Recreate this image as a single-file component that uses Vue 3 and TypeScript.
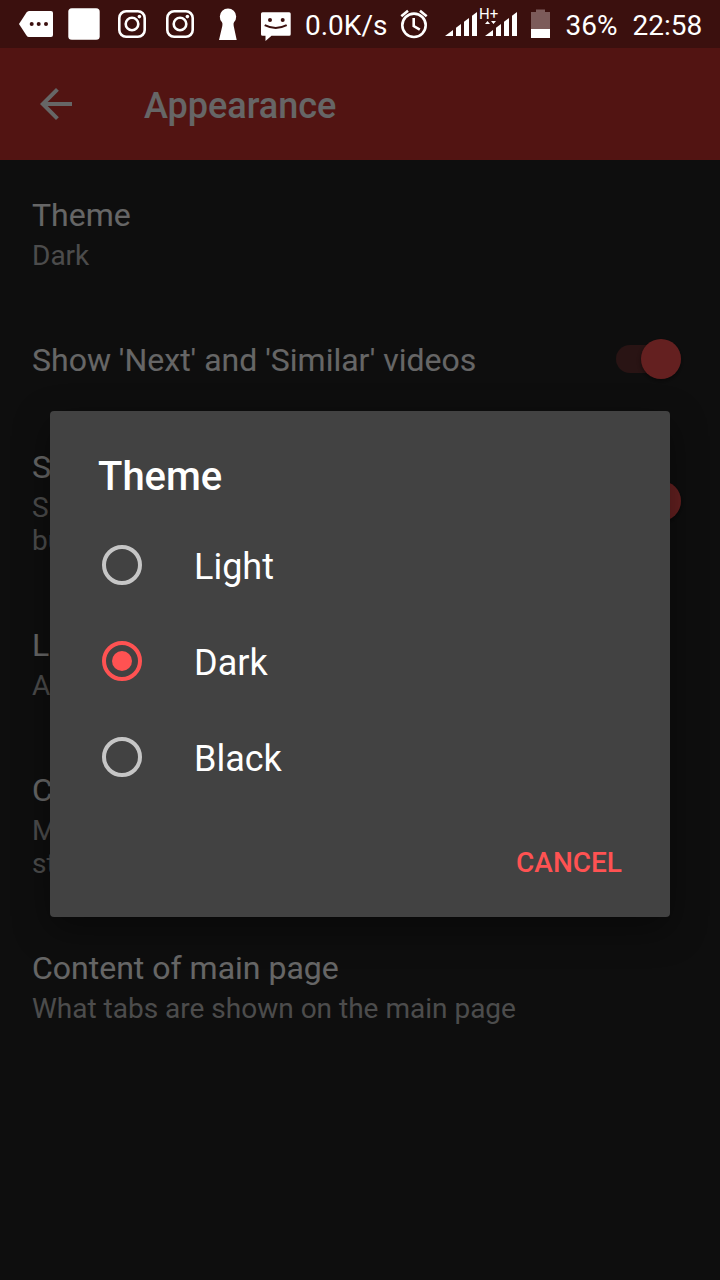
<script setup lang="ts">
import { reactive, ref } from 'vue'

interface Preference {
  id: string
  title: string
  summary?: string
  toggle?: boolean
}

const preferences: Preference[] = [
  { id: 'theme', title: 'Theme', summary: 'Dark' },
  { id: 'similar', title: "Show 'Next' and 'Similar' videos", toggle: true },
  {
    id: 'tip',
    title: 'Show "Hold to append" tip',
    summary: 'Show tip when background or popup\nbutton is pressed on video page',
    toggle: true,
  },
  { id: 'list', title: 'List view mode', summary: 'Auto' },
  {
    id: 'captions',
    title: 'Captions',
    summary: 'Modify player caption text scale and\nstyles. Requires app restart',
  },
  { id: 'tabs', title: 'Content of main page', summary: 'What tabs are shown on the main page' },
]

const enabled = reactive<Record<string, boolean>>({ similar: true, tip: true })
const themes = ['Light', 'Dark', 'Black']
const selected = ref('Dark')
const dialogOpen = ref(true)

function openPreference(id: string) {
  if (id === 'theme') dialogOpen.value = true
}
</script>

<template>
  <div class="screen">
    <header class="status">
      <svg class="icon" viewBox="0 0 48 48" aria-hidden="true">
        <path d="M7 24 14.500 12.500Q15.500 11 17 11H39Q41 11 41 13V35Q41 37 39 37H17Q15.500 37 14.500 35.500Z" fill="#fff" />
        <g class="cut"><circle cx="19.700" cy="24" r="2" /><circle cx="26.700" cy="24" r="2" /><circle cx="34" cy="24" r="2" /></g>
      </svg>
      <svg class="icon" viewBox="0 0 48 48" aria-hidden="true">
        <rect x="8.300" y="8.300" width="31.400" height="31.400" rx="3.500" fill="#fff" />
      </svg>
      <svg v-for="n in 2" :key="n" class="icon" viewBox="0 0 48 48" aria-hidden="true">
        <g fill="none" stroke="#fff" stroke-width="2.600">
          <rect x="11.300" y="11.300" width="25.400" height="25.400" rx="6.800" />
          <circle cx="24" cy="24" r="6.300" />
        </g>
        <circle cx="31.400" cy="16.600" r="1.800" fill="#fff" />
      </svg>
      <svg class="icon" viewBox="0 0 48 48" aria-hidden="true">
        <path d="M18 22.200A8.200 8.200 0 1 1 30 22.200Q29.200 23.500 29.700 26L32.700 40H15L18.300 26Q18.800 23.500 18 22.200Z" fill="#fff" />
      </svg>
      <svg class="icon" viewBox="0 0 48 48" aria-hidden="true">
        <path d="M10.500 12.200H37.200Q38.700 12.200 38.700 13.700V34.200Q38.700 35.700 37.200 35.700H19.500L13.500 41V35.700H10.500Q9 35.700 9 34.200V13.700Q9 12.200 10.500 12.200Z" fill="#fff" />
        <g class="cut"><circle cx="18" cy="20" r="2" /><circle cx="30.700" cy="20" r="2" /></g>
        <path class="smile" d="M12.700 25.200Q23.700 30.800 34.700 25.200" />
      </svg>
      <span class="speed">0.0K/s</span>
      <svg class="icon" viewBox="0 0 48 48" aria-hidden="true">
        <g fill="none" stroke="#fff" stroke-width="2.600">
          <circle cx="24" cy="25.300" r="11.700" />
          <path d="M11.300 16.200 18 10.700M30 10.700 36.700 16.200M23.700 18V26L29.800 29.700" />
        </g>
      </svg>
      <svg class="signal" viewBox="0 0 84 48" aria-hidden="true">
        <path d="M7 36 15 30V36ZM18 27.700 23 24V36H18ZM26 21.700 31 18V36H26ZM34 15.700 39 12V36H34Z" fill="#fff" />
        <path d="M47 36 55 30V36ZM58 27.700 63 24V36H58ZM66 21.700 71 18V36H66ZM74 15.700 79 12V36H74Z" fill="#fff" />
        <path d="M47 24 49.500 21 52 24ZM53 21H58L55.500 24Z" fill="#fff" />
        <text x="41" y="19">H+</text>
      </svg>
      <svg class="battery" viewBox="0 0 36 48" aria-hidden="true">
        <path d="M9 12H14V9.500H23V12H28V29H9Z" fill="#7c5b5a" />
        <path d="M9 29H28V38H9Z" fill="#fff" />
      </svg>
      <span class="percent">36%</span>
      <time>22:58</time>
    </header>

    <div class="content">
      <div class="appbar">
        <button class="back" type="button" aria-label="Back">
          <svg viewBox="0 0 24 24" aria-hidden="true">
            <path d="M20 11H7.830l5.590-5.590L12 4l-8 8 8 8 1.410-1.410L7.830 13H20z" fill="currentColor" />
          </svg>
        </button>
        <h1>Appearance</h1>
      </div>

      <main>
        <template v-for="item in preferences" :key="item.id">
          <label v-if="item.toggle" class="row" :for="item.id">
            <span class="copy">
              <span class="title">{{ item.title }}</span>
              <span v-if="item.summary" class="summary">{{ item.summary }}</span>
            </span>
            <input :id="item.id" v-model="enabled[item.id]" class="switch" type="checkbox" role="switch" />
          </label>
          <button v-else class="row" type="button" @click="openPreference(item.id)">
            <span class="copy">
              <span class="title">{{ item.title }}</span>
              <span class="summary">{{ item.summary }}</span>
            </span>
          </button>
        </template>
      </main>

      <div v-if="dialogOpen" class="scrim">
        <section class="dialog" role="dialog" aria-modal="true" aria-labelledby="dialog-title">
          <h2 id="dialog-title">Theme</h2>
          <label v-for="theme in themes" :key="theme" class="option">
            <input v-model="selected" type="radio" name="theme" :value="theme" />
            <span>{{ theme }}</span>
          </label>
          <div class="actions">
            <button type="button" @click="dialogOpen = false">CANCEL</button>
          </div>
        </section>
      </div>
    </div>
  </div>
</template>

<style>
body {
  background: #0e0e0e;
}
</style>

<style scoped>
.screen {
  display: flex;
  flex-direction: column;
  min-height: 100vh;
  font-family: Roboto, sans-serif;
  color: #fff;
}

.screen * {
  box-sizing: border-box;
}

button {
  border: 0;
  background: none;
  font-family: inherit;
  text-align: left;
}

.status {
  display: flex;
  align-items: center;
  height: 48px;
  padding: 0 12px;
  background: #3b100e;
  font-size: 28px;
  line-height: 32px;
  white-space: nowrap;
}

.status svg {
  flex: none;
  height: 48px;
}

.status span,
.status time {
  padding-top: 4px;
}

.icon {
  width: 48px;
}

.cut {
  fill: #3b100e;
}

.smile {
  fill: none;
  stroke: #3b100e;
  stroke-width: 2;
}

.status .speed {
  padding-left: 5px;
  padding-right: 3px;
}

.signal {
  width: 84px;
}

.signal text {
  fill: #fff;
  font-size: 15px;
}

.battery {
  width: 36px;
}

.percent {
  margin: 0 15px 0 7px;
}

.content {
  position: relative;
  flex: 1;
  background: #242424;
}

.appbar {
  display: flex;
  align-items: center;
  height: 112px;
  padding: 0 32px;
  background: #cd322f;
}

.back {
  width: 48px;
  height: 48px;
  padding: 0;
  color: #fff;
}

.back svg {
  display: block;
}

h1 {
  margin: 0 0 0 64px;
  padding-top: 4px;
  font-size: 36px;
  line-height: 42px;
  font-weight: 500;
}

.row {
  display: flex;
  align-items: center;
  width: 100%;
  padding: 32px;
  color: #fff;
}

.copy {
  flex: 1;
  min-width: 0;
}

.title {
  display: block;
  padding-top: 3px;
  font-size: 32px;
  line-height: 40px;
}

.summary {
  display: block;
  padding-top: 4px;
  margin-bottom: 1px;
  font-size: 28px;
  line-height: 33px;
  white-space: pre-line;
  color: #bdbdbd;
}

.switch {
  appearance: none;
  position: relative;
  display: flex;
  align-items: center;
  flex: none;
  width: 65px;
  height: 40px;
  margin: 0 7px 0 0;
}

.switch::before {
  content: '';
  width: 100%;
  height: 28px;
  border-radius: 14px;
  background: rgba(255, 255, 255, 0.3);
}

.switch::after {
  content: '';
  position: absolute;
  left: 0;
  width: 40px;
  height: 40px;
  border-radius: 50%;
  background: #bdbdbd;
  box-shadow: 0 2px 4px rgba(0, 0, 0, 0.4);
}

.switch:checked::before {
  background: rgba(255, 82, 82, 0.3);
}

.switch:checked::after {
  left: auto;
  right: 0;
  background: #fa5050;
}

.scrim {
  position: absolute;
  inset: 0;
  display: flex;
  align-items: center;
  padding: 0 50px;
  background: rgba(0, 0, 0, 0.6);
}

.dialog {
  width: 100%;
  border-radius: 4px;
  background: #424242;
  box-shadow: 0 12px 36px rgba(0, 0, 0, 0.4);
}

h2 {
  margin: 0;
  padding: 42px 48px 16px;
  font-size: 40px;
  line-height: 48px;
  font-weight: 500;
}

.option {
  display: flex;
  align-items: center;
  height: 96px;
  padding: 0 52px;
  font-size: 36px;
  line-height: 42px;
}

.option span {
  padding-top: 4px;
}

.option input {
  appearance: none;
  display: grid;
  place-items: center;
  flex: none;
  width: 40px;
  height: 40px;
  margin: 0 52px 0 0;
  border: 4px solid #c6c6c6;
  border-radius: 50%;
}

.option input:checked {
  border-color: #ff5252;
}

.option input:checked::before {
  content: '';
  width: 20px;
  height: 20px;
  border-radius: 50%;
  background: #ff5252;
}

.actions {
  display: flex;
  justify-content: flex-end;
  height: 112px;
  padding: 8px 32px;
}

.actions button {
  height: 96px;
  padding: 4px 16px 0;
  font-size: 28px;
  line-height: 32px;
  font-weight: 500;
  color: #ff5252;
}
</style>
